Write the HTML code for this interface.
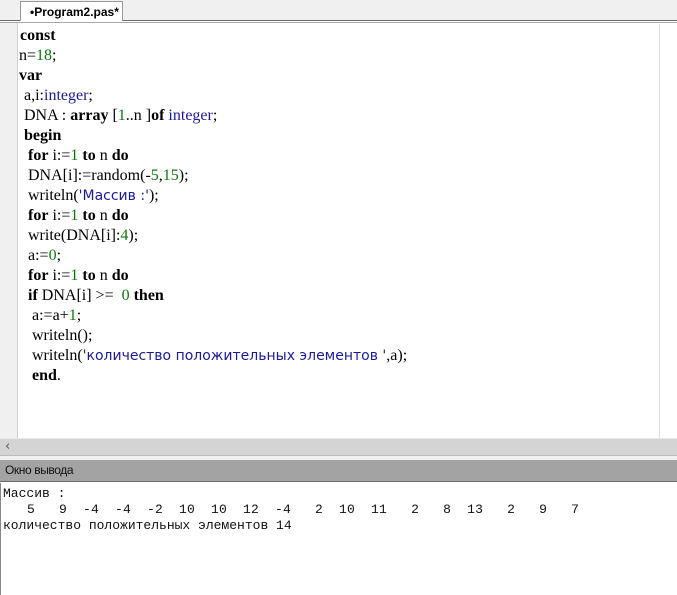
<!DOCTYPE html>
<html><head><meta charset="utf-8"><style>
body{margin:0;width:677px;height:595px;overflow:hidden;background:#fff;position:relative;font-family:"Liberation Serif",serif}
.tabbar{position:absolute;left:0;top:0;width:677px;height:20px;background:#f0f0f0;border-bottom:1px solid #6a6a6a}
.tabline{position:absolute;left:0;top:22px;width:677px;height:1px;background:#a8a8a8}
.tab{position:absolute;left:20px;top:1px;width:103px;height:20px;background:#fff;border:1px solid #999;border-bottom:none;font:bold 12px "Liberation Sans",sans-serif;color:#000;line-height:20px;padding-left:9px;box-sizing:border-box}
.gut{position:absolute;left:0;top:23px;width:17px;height:415px;background:#f0f0f0;border-right:1px solid #cfcfcf}
.margin{position:absolute;left:659px;top:24px;width:1px;height:414px;background:#ddd}
.code{position:absolute;left:0;top:26px;font-size:16px;line-height:20px;color:#000}
.code div{white-space:pre;height:20px}
b{font-weight:bold}
.n{color:#0a7a0a}.t{color:#1a1aa0}.s{color:#1a1aa0;font-family:"DejaVu Sans",sans-serif;font-size:14px}
.sb{position:absolute;left:0;top:438px;width:677px;height:17px;background:#d4d4d4;border-top:1px solid #e8e8e8}
.sep{position:absolute;left:0;top:455px;width:677px;height:5px;background:#f0f0f0;border-top:1px solid #bbb}
.hdr{position:absolute;left:0;top:460px;width:677px;height:22px;background:#a3a3a3;font:12px "Liberation Sans",sans-serif;line-height:21px;padding-left:5px;box-sizing:border-box;color:#111;border-bottom:1px solid #6e6e6e;letter-spacing:-0.4px}
.out{position:absolute;left:0;top:483px;width:677px;height:112px;border-left:1px solid #888;box-sizing:border-box;font:13px "Liberation Mono",monospace;line-height:16px;padding:3px 0 0 2px;white-space:pre;color:#111}
</style></head><body>
<div class="tabbar"></div><div class="tabline"></div>
<div class="tab">•Program2.pas*</div>
<div class="gut"></div><div class="margin"></div>
<div class="code">
<div style="padding-left:20px"><b>const</b></div>
<div style="padding-left:19px">n=<span class="n">18</span>;</div>
<div style="padding-left:19px"><b>var</b></div>
<div style="padding-left:24px">a,i:<span class="t">integer</span>;</div>
<div style="padding-left:24px">DNA : <b>array</b> [<span class="n">1</span>..n ]<b>of</b> <span class="t">integer</span>;</div>
<div style="padding-left:24px"><b>begin</b></div>
<div style="padding-left:28px"><b>for</b> i:=<span class="n">1</span> <b>to</b> n <b>do</b></div>
<div style="padding-left:28px">DNA[i]:=random(-<span class="n">5</span>,<span class="n">15</span>);</div>
<div style="padding-left:28px">writeln(<span class="s">'Массив :'</span>);</div>
<div style="padding-left:28px"><b>for</b> i:=<span class="n">1</span> <b>to</b> n <b>do</b></div>
<div style="padding-left:28px">write(DNA[i]:<span class="n">4</span>);</div>
<div style="padding-left:28px">a:=<span class="n">0</span>;</div>
<div style="padding-left:28px"><b>for</b> i:=<span class="n">1</span> <b>to</b> n <b>do</b></div>
<div style="padding-left:28px"><b>if</b> DNA[i] &gt;=  <span class="n">0</span> <b>then</b></div>
<div style="padding-left:32px">a:=a+<span class="n">1</span>;</div>
<div style="padding-left:32px">writeln();</div>
<div style="padding-left:32px">writeln(<span class="s">'количество положительных элементов '</span>,a);</div>
<div style="padding-left:32px"><b>end</b>.</div>
</div>
<div class="sb"><span style="position:absolute;left:5px;top:0;font:13px 'DejaVu Sans',sans-serif;color:#555">‹</span></div>
<div class="sep"></div>
<div class="hdr">Окно вывода</div>
<div class="out">Массив :
<span style="letter-spacing:0.2px">   5   9  -4  -4  -2  10  10  12  -4   2  10  11   2   8  13   2   9   7</span>
количество положительных элементов 14</div>
</body></html>
